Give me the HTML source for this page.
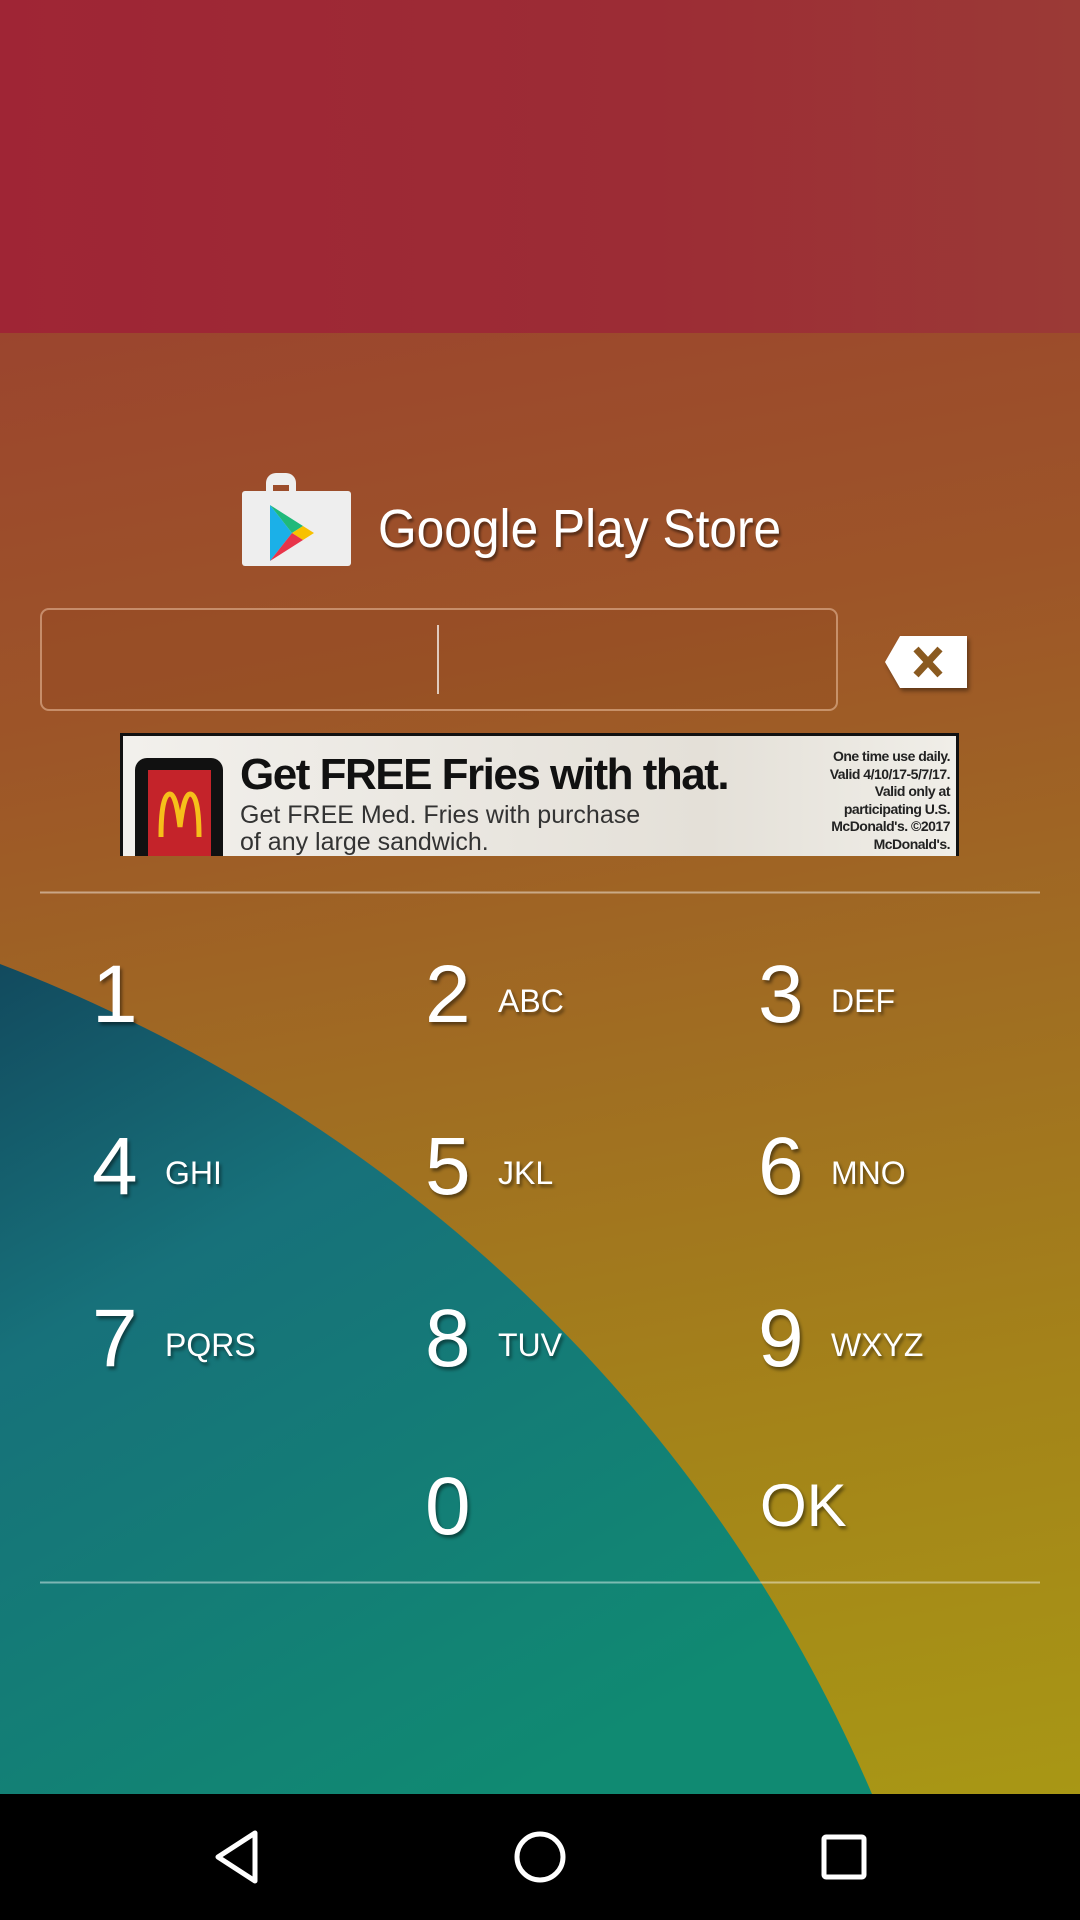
<!DOCTYPE html>
<html><head><meta charset="utf-8"><style>
*{margin:0;padding:0;box-sizing:border-box}
body{width:1080px;height:1920px;position:relative;overflow:hidden;font-family:"Liberation Sans",sans-serif;background:#000}
.abs{position:absolute}
.t{color:#fff;text-shadow:2px 3px 3px rgba(0,0,0,.45);position:absolute;white-space:nowrap}
.d{font-size:82px;line-height:1}
.l{font-size:32px;line-height:1}
</style></head><body>
<div class="abs" style="left:0;top:0;width:1080px;height:333px;background:linear-gradient(90deg,#9f2535,#9c2c35 60%,#9b3a36)"></div>
<div class="abs" style="left:0;top:333px;width:1080px;height:1461px;background:linear-gradient(170deg,#9b452e 0%,#9d5528 25%,#a06d22 50%,#a48419 75%,#a89715 100%)"></div>
<svg class="abs" style="left:0;top:0" width="1080" height="1920">
<defs><linearGradient id="tg" x1="0" y1="0" x2="0.6" y2="1"><stop offset="0" stop-color="#124a5e"/><stop offset="0.35" stop-color="#17717a"/><stop offset="1" stop-color="#108a72"/></linearGradient></defs>
<path d="M0,964 C430,1130 720,1440 872,1794 L0,1794 Z" fill="url(#tg)"/>
<line x1="40" y1="892.5" x2="1040" y2="892.5" stroke="rgba(255,255,255,.45)" stroke-width="2"/>
<line x1="40" y1="1582.5" x2="1040" y2="1582.5" stroke="rgba(255,255,255,.45)" stroke-width="2"/>
<g>
<path d="M266,493 v-10 a10,10 0 0 1 10,-10 h10 a10,10 0 0 1 10,10 v10 h-7 v-8 h-16 v8 z" fill="#eee"/>
<rect x="242" y="491" width="109" height="75" rx="3" fill="#eee"/>
<path d="M270,505 L292,533 L270,561 Z" fill="#1bb0e8"/>
<path d="M270,505 L303,526 L292,533 Z" fill="#1fb97a"/>
<path d="M303,526 L314,533 L303,540 L292,533 Z" fill="#f8c100"/>
<path d="M292,533 L303,540 L270,561 Z" fill="#e8344a"/>
</g>
<path d="M900,636 L967,636 L967,688 L900,688 L885,662 Z" fill="#fff" filter="drop-shadow(2px 3px 2px rgba(0,0,0,.4))"/>
<path d="M916,649 L940,675 M940,649 L916,675" stroke="#8a5a20" stroke-width="7"/>
<path d="M255,1833 L255,1881 L218,1857 Z" fill="none" stroke="#fff" stroke-width="5" stroke-linejoin="round"/>
<circle cx="540" cy="1857" r="23" fill="none" stroke="#fff" stroke-width="5"/>
<rect x="824" y="1837" width="40" height="40" rx="2" fill="none" stroke="#fff" stroke-width="5"/>
</svg>
<div class="t" style="left:378px;top:502px;font-size:54px;line-height:1;transform:scaleX(0.92);transform-origin:left top">Google Play Store</div>
<div class="abs" style="left:40px;top:608px;width:798px;height:103px;border:2px solid rgba(255,220,190,.45);border-radius:9px;background:rgba(120,50,20,.12)"></div>
<div class="abs" style="left:437px;top:625px;width:2px;height:69px;background:rgba(255,255,255,.7)"></div>
<div class="abs" style="left:120px;top:733px;width:839px;height:123px;background:linear-gradient(90deg,#f2f0ec,#e4e0d8 70%,#f0eee8);border:3px solid #111;border-bottom:none;overflow:hidden">
<div class="abs" style="left:12px;top:22px;width:88px;height:110px;background:#111;border-radius:12px"></div>
<div class="abs" style="left:25px;top:34px;width:63px;height:90px;background:#c4232a"></div>
<svg class="abs" style="left:34px;top:55px" width="46" height="48"><path d="M4,46 C4,10 9,3 13,3 C18,3 21,20 23,36 C25,20 28,3 33,3 C37,3 42,10 42,46" fill="none" stroke="#f6bf1a" stroke-width="5"/></svg>
<div class="abs" style="left:117px;top:17px;font-size:44px;font-weight:bold;color:#111;letter-spacing:-1.5px;line-height:1;white-space:nowrap">Get FREE Fries with that.</div>
<div class="abs" style="left:117px;top:66px;font-size:25px;color:#333;line-height:27px;white-space:nowrap">Get FREE Med. Fries with purchase<br>of any large sandwich.</div>
<div class="abs" style="right:6px;top:12px;font-size:14px;color:#222;line-height:17.5px;text-align:right;font-weight:bold;letter-spacing:-0.5px">One time use daily.<br>Valid 4/10/17-5/7/17.<br>Valid only at<br>participating U.S.<br>McDonald's. ©2017<br>McDonald's.</div>
</div>
<div class="t d" style="left:92px;top:954px">1</div>
<div class="t d" style="left:425px;top:954px">2</div><div class="t l" style="left:498px;top:985px">ABC</div>
<div class="t d" style="left:758px;top:954px">3</div><div class="t l" style="left:831px;top:985px">DEF</div>
<div class="t d" style="left:92px;top:1126px">4</div><div class="t l" style="left:165px;top:1157px">GHI</div>
<div class="t d" style="left:425px;top:1126px">5</div><div class="t l" style="left:498px;top:1157px">JKL</div>
<div class="t d" style="left:758px;top:1126px">6</div><div class="t l" style="left:831px;top:1157px">MNO</div>
<div class="t d" style="left:92px;top:1298px">7</div><div class="t l" style="left:165px;top:1329px">PQRS</div>
<div class="t d" style="left:425px;top:1298px">8</div><div class="t l" style="left:498px;top:1329px">TUV</div>
<div class="t d" style="left:758px;top:1298px">9</div><div class="t l" style="left:831px;top:1329px">WXYZ</div>
<div class="t d" style="left:425px;top:1466px">0</div>
<div class="t" style="left:760px;top:1476px;font-size:60px;line-height:1">OK</div>
</body></html>
